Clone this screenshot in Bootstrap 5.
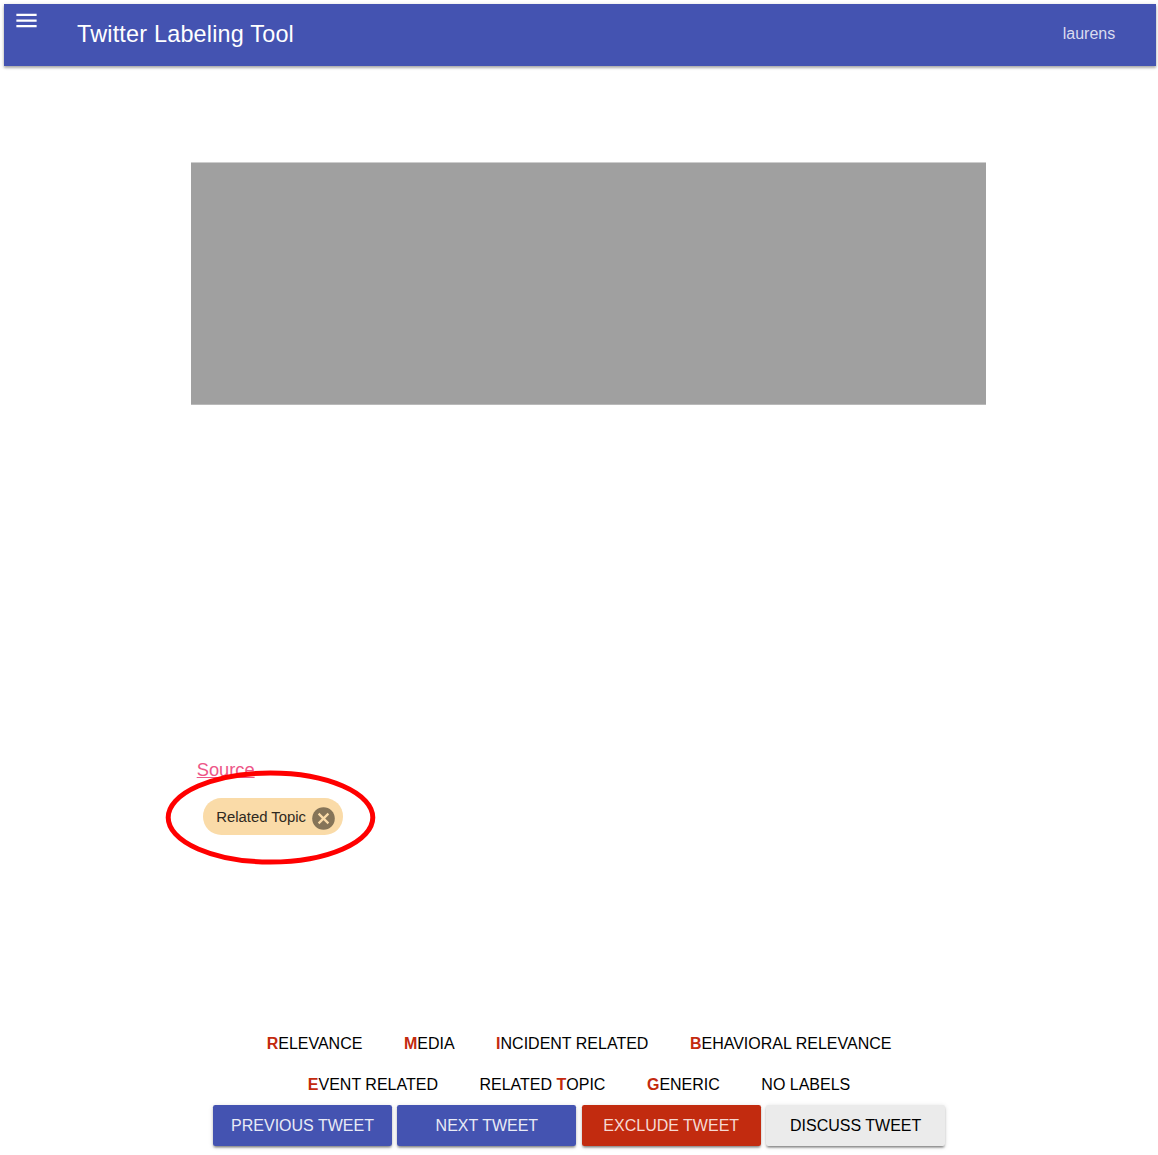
<!DOCTYPE html>
<html lang="en">
<head>
<meta charset="utf-8">
<title>Twitter Labeling Tool</title>
<link href="https://cdn.jsdelivr.net/npm/bootstrap@5.3.0/dist/css/bootstrap.min.css" rel="stylesheet">
<style>
body{font-family:"Liberation Sans",Arial,sans-serif;color:#000;background:#fff;height:1155px;padding:4px 2.5px 0 4px;overflow:hidden}
.app-bar{height:62px;background:#4453b1;color:#fff;box-shadow:0 2px 2px rgba(0,0,0,.22),0 1px 4px rgba(0,0,0,.2)}
.menu-btn{width:27px;height:27px;margin:3px 0 0 9.4px;line-height:0}
.app-title{font-size:23.4px;letter-spacing:.2px;line-height:60px;margin-left:36.6px}
.app-user{font-size:16px;line-height:60px;margin-right:40.3px;color:#dadcef}
.tweet-col{width:795px;margin-left:187px;margin-top:96px}
.tweet-box{height:243px;background:#a0a0a0;border-top:1px solid #cdcdcd;border-bottom:1px solid #b9b9b9}
.source-row{margin:353px 0 0 5.7px;height:24px;line-height:24px;font-size:18.3px}
.source-row a{color:#ed5688;text-decoration:underline}
.topic-chip{margin:16px 0 0 12px;width:139.6px;height:36.5px;border-radius:18.3px;background:#fadba8;padding-left:13.2px;font-size:14.86px;color:#2f2920}
.topic-chip span{padding-top:2px}
.chip-x{margin:4px 0 0 6.2px;width:23px;height:23px}
.ring{left:165px;top:770px}
.label-area{margin-top:188px;margin-right:1.4px;font-size:16px;white-space:nowrap}
.label-row{height:41px;line-height:41px;gap:41.5px}
.label-row b{color:#c32a0e}
.action-row{gap:5.2px}
.act{width:179.2px;height:41px;line-height:41px;padding:0;border:0;border-radius:2.3px;font-size:16px;color:#e9ebf6;background:#4453b1;box-shadow:0 2px 2px rgba(0,0,0,.22),0 3px 2px -2px rgba(0,0,0,.25),0 1px 5px rgba(0,0,0,.14)}
.act-red{background:#c22b0f;color:#f6d9d3}
.act-gray{background:#ebebeb;color:#000}
</style>
<script src="https://cdn.jsdelivr.net/npm/bootstrap@5.3.0/dist/js/bootstrap.bundle.min.js"></script>
</head>
<body>
<header class="app-bar d-flex">
  <button class="menu-btn btn p-0 border-0" aria-label="Menu"><svg width="27" height="27" viewBox="0 0 24 24" fill="#fff"><path d="M3 18h18v-2H3v2zm0-5h18v-2H3v2zm0-7v2h18V6H3z"/></svg></button>
  <span class="app-title">Twitter Labeling Tool</span>
  <span class="app-user ms-auto">laurens</span>
</header>
<main>
  <section class="tweet-col">
    <div class="tweet-box"></div>
    <div class="source-row"><a href="#">Source</a></div>
    <div class="topic-chip d-flex align-items-center"><span>Related Topic</span>
      <svg class="chip-x" viewBox="0 0 23 23"><circle cx="11.5" cy="11.5" r="11.3" fill="#857458"/><path d="M6.6 6.6l9.8 9.8M16.4 6.6l-9.8 9.8" stroke="#fadba8" stroke-width="2.2"/></svg>
    </div>
  </section>
  <section class="label-area">
    <div class="label-row d-flex justify-content-center"><span><b>R</b>ELEVANCE</span><span><b>M</b>EDIA</span><span><b>I</b>NCIDENT RELATED</span><span><b>B</b>EHAVIORAL RELEVANCE</span></div>
    <div class="label-row d-flex justify-content-center"><span><b>E</b>VENT RELATED</span><span>RELATED <b>T</b>OPIC</span><span><b>G</b>ENERIC</span><span>NO LABELS</span></div>
    <div class="action-row d-flex justify-content-center">
      <button class="act btn">PREVIOUS TWEET</button><button class="act btn">NEXT TWEET</button><button class="act act-red btn">EXCLUDE TWEET</button><button class="act act-gray btn">DISCUSS TWEET</button>
    </div>
  </section>
</main>
<svg class="ring position-absolute pe-none" width="211" height="95" viewBox="0 0 211 95"><ellipse cx="105.5" cy="47.5" rx="102.3" ry="44.5" fill="none" stroke="#f00" stroke-width="5"/></svg>
</body>
</html>
